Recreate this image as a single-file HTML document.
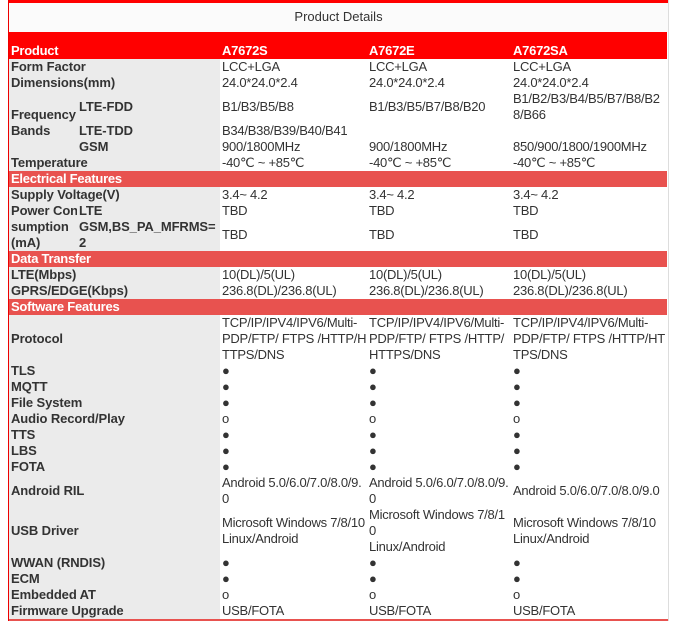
<!DOCTYPE html>
<html><head><meta charset="utf-8"><style>
body{margin:0;background:#fff;width:676px;height:622px;overflow:hidden;font-family:"Liberation Sans",Arial,sans-serif;font-size:13px;color:#333}
.wrap{position:absolute;left:8px;top:0;width:659px;border-left:1px solid #e00;border-right:1px solid #ddd}
.top{height:3px;background:#f00}
.title{height:29px;line-height:27px;text-align:center;background:#fbfbfb;color:#333;font-size:13px}
table{border-collapse:collapse;table-layout:fixed;width:658px}
td{padding:0 0 0 2px;line-height:16px;vertical-align:middle;background:#fff;white-space:nowrap;overflow:hidden;letter-spacing:-0.25px}
td.l{background:#ebebeb;font-weight:bold;letter-spacing:-0.1px}
tr.h td{background:#f00;color:#fff;font-weight:bold;height:27px;vertical-align:bottom;line-height:16px;padding-bottom:0}
tr.s td{background:#e8524f;color:#fff;font-weight:bold;height:16px;line-height:16px}
.bot{height:2px;background:#e8524f}
</style></head><body>
<div class="wrap">
<div class="top"></div>
<div class="title">Product Details</div>
<table>
<colgroup><col style="width:68px"><col style="width:143px"><col style="width:147px"><col style="width:144px"><col style="width:156px"></colgroup>
<tr class="h"><td colspan="2">Product</td><td>A7672S</td><td>A7672E</td><td>A7672SA</td></tr>
<tr><td class="l" colspan="2">Form Factor</td><td>LCC+LGA</td><td>LCC+LGA</td><td>LCC+LGA</td></tr>
<tr><td class="l" colspan="2">Dimensions(mm)</td><td>24.0*24.0*2.4</td><td>24.0*24.0*2.4</td><td>24.0*24.0*2.4</td></tr>
<tr><td class="l" rowspan="3">Frequency<br>Bands</td><td class="l">LTE-FDD</td><td>B1/B3/B5/B8</td><td>B1/B3/B5/B7/B8/B20</td><td>B1/B2/B3/B4/B5/B7/B8/B2<br>8/B66</td></tr>
<tr><td class="l">LTE-TDD</td><td>B34/B38/B39/B40/B41</td><td></td><td></td></tr>
<tr><td class="l">GSM</td><td>900/1800MHz</td><td>900/1800MHz</td><td>850/900/1800/1900MHz</td></tr>
<tr><td class="l" colspan="2">Temperature</td><td>-40℃ ~ +85℃</td><td>-40℃ ~ +85℃</td><td>-40℃ ~ +85℃</td></tr>
<tr class="s"><td colspan="5">Electrical Features</td></tr>
<tr><td class="l" colspan="2">Supply Voltage(V)</td><td>3.4~ 4.2</td><td>3.4~ 4.2</td><td>3.4~ 4.2</td></tr>
<tr><td class="l" rowspan="2">Power Con<br>sumption<br>(mA)</td><td class="l">LTE</td><td>TBD</td><td>TBD</td><td>TBD</td></tr>
<tr><td class="l">GSM,BS_PA_MFRMS=<br>2</td><td>TBD</td><td>TBD</td><td>TBD</td></tr>
<tr class="s"><td colspan="5">Data Transfer</td></tr>
<tr><td class="l" colspan="2">LTE(Mbps)</td><td>10(DL)/5(UL)</td><td>10(DL)/5(UL)</td><td>10(DL)/5(UL)</td></tr>
<tr><td class="l" colspan="2">GPRS/EDGE(Kbps)</td><td>236.8(DL)/236.8(UL)</td><td>236.8(DL)/236.8(UL)</td><td>236.8(DL)/236.8(UL)</td></tr>
<tr class="s"><td colspan="5">Software Features</td></tr>
<tr><td class="l" colspan="2">Protocol</td><td>TCP/IP/IPV4/IPV6/Multi-<br>PDP/FTP/ FTPS /HTTP/H<br>TTPS/DNS</td><td>TCP/IP/IPV4/IPV6/Multi-<br>PDP/FTP/ FTPS /HTTP/<br>HTTPS/DNS</td><td>TCP/IP/IPV4/IPV6/Multi-<br>PDP/FTP/ FTPS /HTTP/HT<br>TPS/DNS</td></tr>
<tr><td class="l" colspan="2">TLS</td><td>●</td><td>●</td><td>●</td></tr>
<tr><td class="l" colspan="2">MQTT</td><td>●</td><td>●</td><td>●</td></tr>
<tr><td class="l" colspan="2">File System</td><td>●</td><td>●</td><td>●</td></tr>
<tr><td class="l" colspan="2">Audio Record/Play</td><td>o</td><td>o</td><td>o</td></tr>
<tr><td class="l" colspan="2">TTS</td><td>●</td><td>●</td><td>●</td></tr>
<tr><td class="l" colspan="2">LBS</td><td>●</td><td>●</td><td>●</td></tr>
<tr><td class="l" colspan="2">FOTA</td><td>●</td><td>●</td><td>●</td></tr>
<tr><td class="l" colspan="2">Android RIL</td><td>Android 5.0/6.0/7.0/8.0/9.<br>0</td><td>Android 5.0/6.0/7.0/8.0/9.<br>0</td><td>Android 5.0/6.0/7.0/8.0/9.0</td></tr>
<tr><td class="l" colspan="2">USB Driver</td><td>Microsoft Windows 7/8/10<br>Linux/Android</td><td>Microsoft Windows 7/8/1<br>0<br>Linux/Android</td><td>Microsoft Windows 7/8/10<br>Linux/Android</td></tr>
<tr><td class="l" colspan="2">WWAN (RNDIS)</td><td>●</td><td>●</td><td>●</td></tr>
<tr><td class="l" colspan="2">ECM</td><td>●</td><td>●</td><td>●</td></tr>
<tr><td class="l" colspan="2">Embedded AT</td><td>o</td><td>o</td><td>o</td></tr>
<tr><td class="l" colspan="2">Firmware Upgrade</td><td>USB/FOTA</td><td>USB/FOTA</td><td>USB/FOTA</td></tr>
</table>
<div class="bot"></div>
</div>
</body></html>
